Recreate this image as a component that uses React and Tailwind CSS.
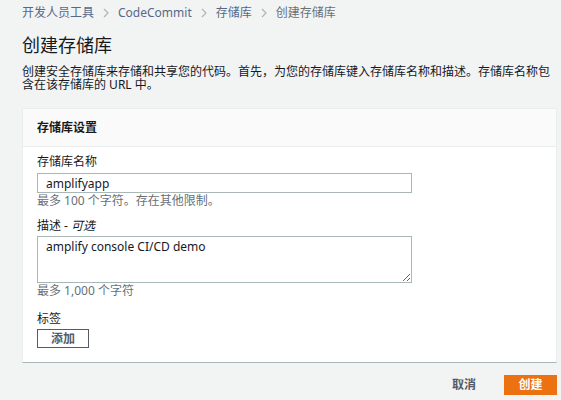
import React from 'react';

const Chevron = () => (
  <svg className="w-[6px] h-[10px] mx-[9px]" viewBox="0 0 6 10" fill="none">
    <path d="M1 1l4 4-4 4" stroke="#aab7b8" strokeWidth="1.2" />
  </svg>
);

const App = () => {
  return (
    <div
      className="w-[561px] h-[400px] overflow-hidden bg-[#f2f3f3] pl-[22px] pr-[4px] text-[12px] text-[#16191f]"
      style={{ fontFamily: '"Noto Sans", "Noto Sans CJK SC", sans-serif' }}
    >
      {/* Breadcrumbs */}
      <div className="pt-[5px] flex items-center leading-[16px]">
        <span className="text-[#55698a]">开发人员工具</span>
        <Chevron />
        <span className="text-[#55698a]">CodeCommit</span>
        <Chevron />
        <span className="text-[#55698a]">存储库</span>
        <Chevron />
        <span className="text-[#687078]">创建存储库</span>
      </div>

      <h1 className="mt-[12px] text-[18px] leading-[24px] font-normal">创建存储库</h1>
      <p className="mt-[8px] leading-[13px]">
        创建安全存储库来存储和共享您的代码。首先，为您的存储库键入存储库名称和描述。存储库名称包含在该存储库的 URL 中。
      </p>

      {/* Settings card */}
      <div className="mt-[17px] bg-white border border-[#eaeded] border-b-[#aab7b8]">
        <div className="h-[38px] flex items-center px-[14px] bg-[#fafafa] border-b border-[#eaeded] font-bold">
          存储库设置
        </div>
        <div className="px-[14px] pt-[7px] pb-[14px]">
          <div className="leading-[16px]">存储库名称</div>
          <input
            readOnly
            value="amplifyapp"
            className="mt-[3px] block w-[375px] h-[20px] px-[8px] border border-[#aab7b8] bg-white text-[12px] outline-none"
          />
          <div className="leading-[16px] text-[#687078]">最多 100 个字符。存在其他限制。</div>

          <div className="mt-[9px] leading-[16px]">
            描述 - <i>可选</i>
          </div>
          <textarea
            readOnly
            defaultValue="amplify console CI/CD demo"
            className="mt-[2px] block w-[375px] h-[47px] px-[8px] py-[2px] border border-[#aab7b8] bg-white text-[12px] leading-[16px] outline-none"
          />
          <div className="leading-[16px] text-[#687078]">最多 1,000 个字符</div>

          <div className="mt-[12px] leading-[16px]">标签</div>
          <button className="mt-[2px] w-[52px] h-[19px] border border-[#545b64] bg-white text-[#545b64] font-bold leading-[17px]">
            添加
          </button>
        </div>
      </div>

      {/* Actions */}
      <div className="mt-[12px] flex items-center justify-end gap-[28px]">
        <span className="text-[#545b64] font-bold">取消</span>
        <button className="w-[53px] h-[20px] bg-[#ec7211] text-white font-bold leading-[20px]">创建</button>
      </div>
    </div>
  );
};

export default App;
